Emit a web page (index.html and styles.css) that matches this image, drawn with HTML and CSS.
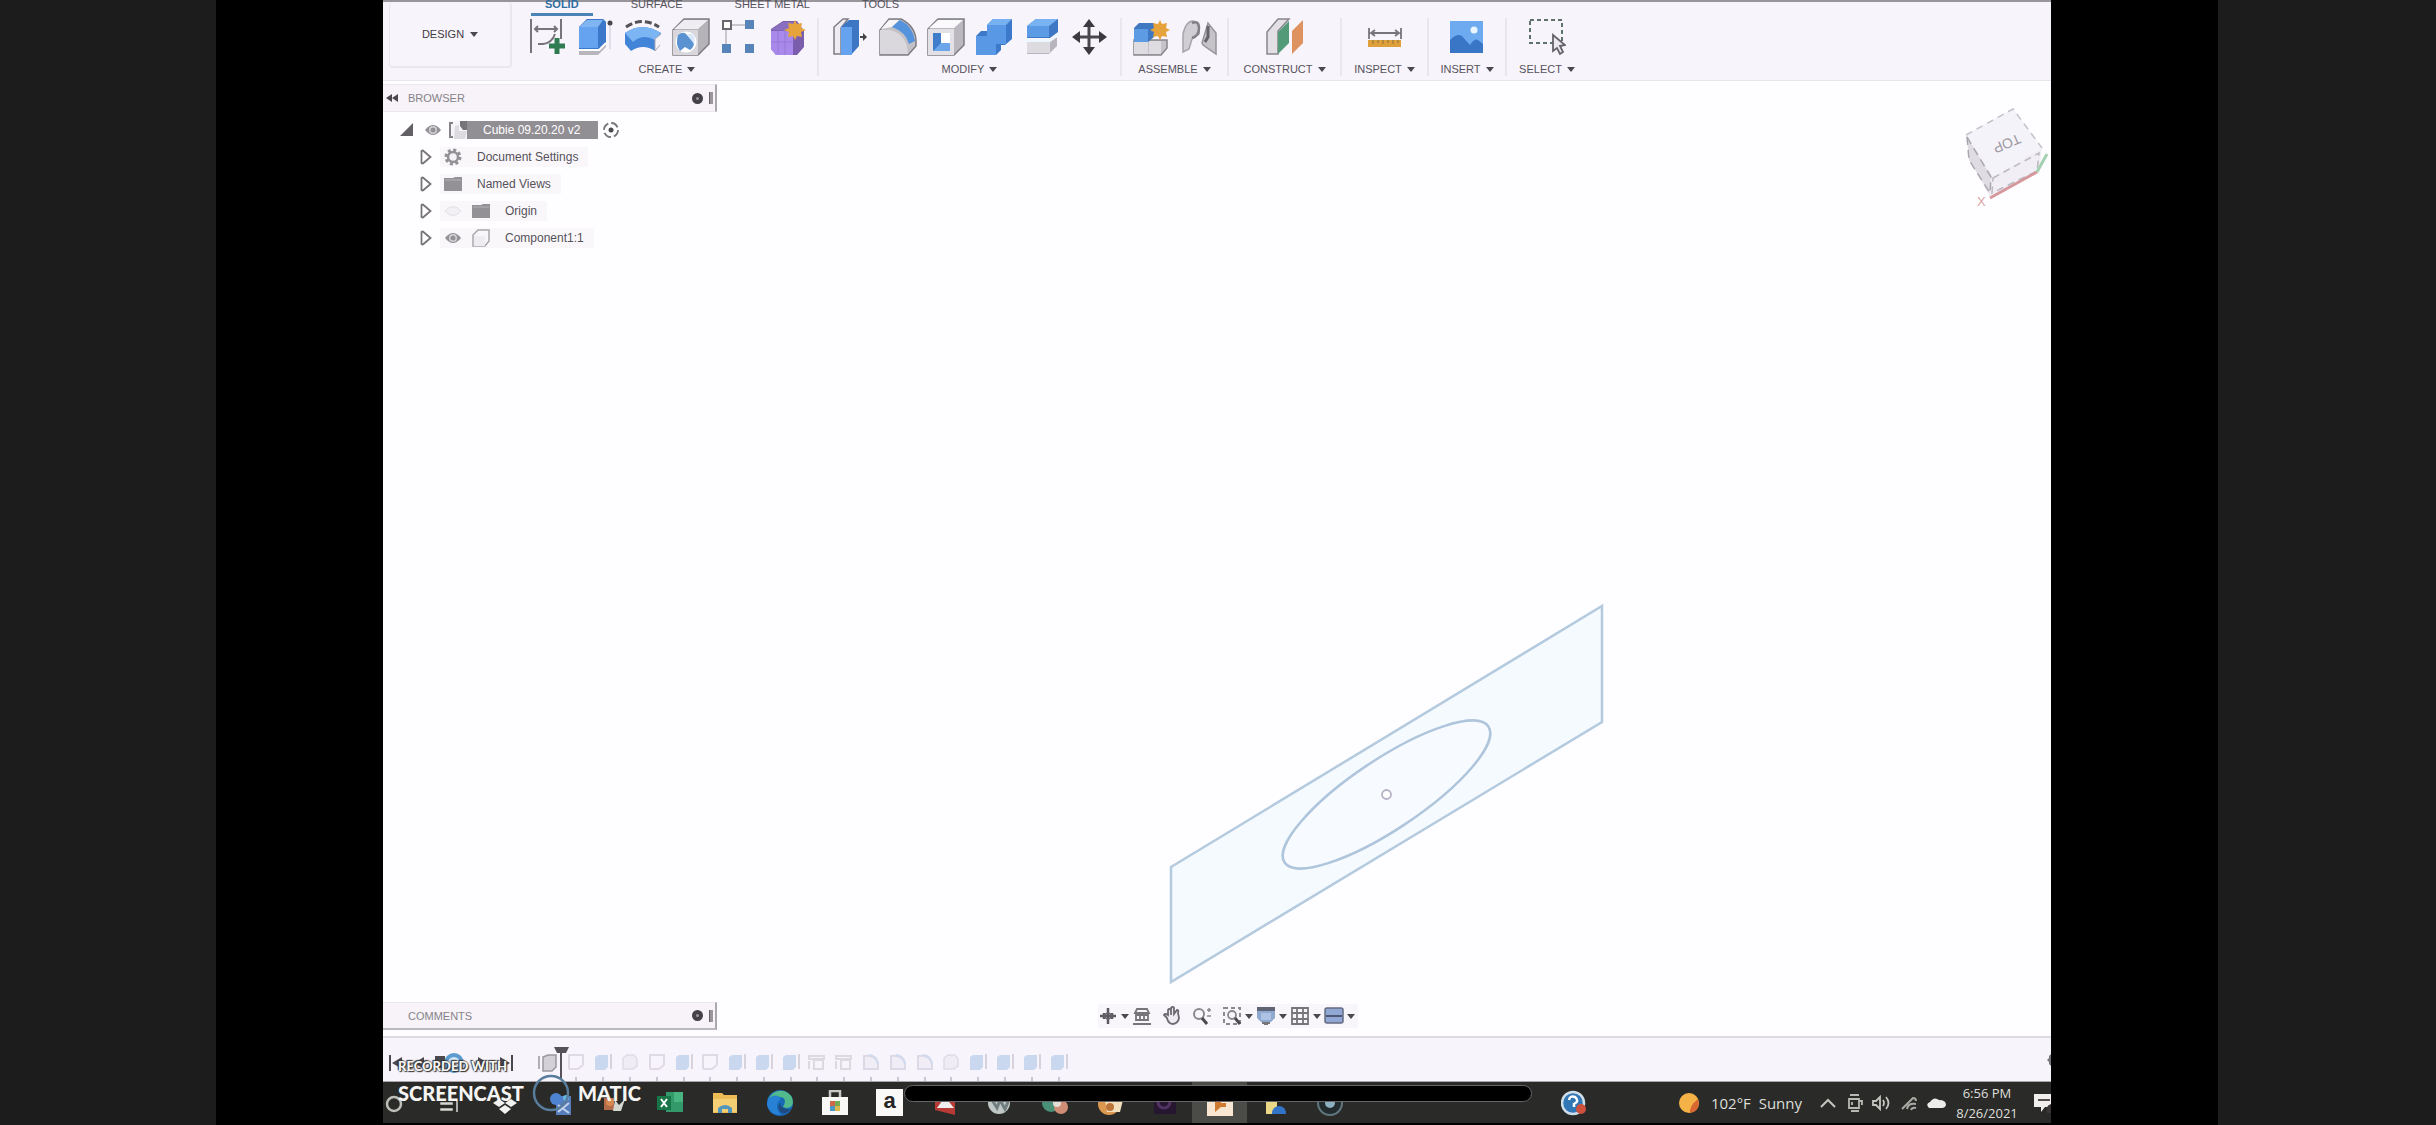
FILE: index.html
```html
<!DOCTYPE html>
<html lang="en">
<head>
<meta charset="utf-8">
<title>Design workspace</title>
<link rel="stylesheet" href="styles.css">
</head>
<body>
<svg class="defs" aria-hidden="true">
  <symbol id="eye" viewBox="0 0 18 18"><path d="M1 9q8-10 16 0q-8 10-16 0z" fill="currentColor"/><circle cx="9" cy="9" r="4" fill="#d6d2d8"/><circle cx="9" cy="9" r="2.500" fill="currentColor"/></symbol>
  <symbol id="eye-off" viewBox="0 0 18 18"><path d="M1 9q8-9 16 0q-8 9-16 0z" fill="#f3f0f5" stroke="#e4e0e6"/></symbol>
  <symbol id="folder" viewBox="0 0 18 18"><path d="M0 3h9l2-1h7v14H0z" fill="#939096"/><path d="M1 5h16" stroke="#b3b0b6"/></symbol>
  <symbol id="expand" viewBox="0 0 12 16"><path d="M1.500 2v12q1 1 2 0l7-6l-7-6q-1-1-2 0z" fill="#fff" stroke="#77747a" stroke-width="1.800"/></symbol>
  <symbol id="t-sketch" viewBox="0 0 20 20"><path d="M3 17V3h14v10M3 17h9l5-4" fill="none" stroke="#e0dae4" stroke-width="2"/></symbol>
  <symbol id="t-extrude" viewBox="0 0 20 20"><path d="M2 5l3-2h10v12l-3 3H2z" fill="#c9d8ee"/><path d="M18 2v15" stroke="#d6d3dc" stroke-width="2"/></symbol>
  <symbol id="t-body" viewBox="0 0 20 20"><path d="M3 6l4-3h7l3 4v7l-4 3H3z" fill="#f0ecf5" stroke="#e0dbe6" stroke-width="1.500"/></symbol>
  <symbol id="t-fillet" viewBox="0 0 20 20"><path d="M3 17V4q12-2 14 8v5z" fill="#f1edf7" stroke="#dcd8e6" stroke-width="2"/><path d="M8 3q8 1 9 9" stroke="#cfdaee" stroke-width="2" fill="none"/></symbol>
  <symbol id="t-hole" viewBox="0 0 20 20"><path d="M2 4h15v3H2zM7 8h9v9H7zM2 9v8" fill="none" stroke="#dcd9e0" stroke-width="2"/></symbol>
</svg>

<div class="stage">
<main class="app">
  <header class="toolbar">
    <button class="design">DESIGN <i class="caret"></i></button>
    <div class="ribbon">
      <nav class="tabs">
        <a class="tab tab-active" href="#solid">SOLID</a>
        <a class="tab" href="#surface">SURFACE</a>
        <a class="tab" href="#sheet">SHEET METAL</a>
        <a class="tab" href="#tools">TOOLS</a>
      </nav>
      <div class="groups">
        <section class="group group-create">
          <div class="icons">
            <button aria-label="Create sketch"><svg viewBox="0 0 38 38"><path d="M3 1v34M33 1v20M7 11h22M10 8l-3 3l3 3M26 8l3 3l-3 3M10 26h5q9-1 12-10" fill="none" stroke="#77747b" stroke-width="2"/><path d="M29 20v16M21 28h16" stroke="#2f7c52" stroke-width="5"/></svg></button>
            <button aria-label="Extrude"><svg viewBox="0 0 38 38"><path d="M3 31V9l8-8h16l3 3v25l-8 8H3z" fill="#b9b5bd"/><path d="M3 31V9l8-8h16l3 3v21l-6 6z" fill="#3c78c9"/><path d="M3 9h19v21H3z" fill="#65a2ef"/><path d="M3 9l8-7h16l-5 7z" fill="#7fb5f3"/><path d="M3 32h20l7-7" fill="none" stroke="#fff" stroke-width="2"/><path d="M34 7v24" stroke="#e2dde6" stroke-width="2"/><circle cx="34" cy="5" r="2.500" fill="#4a474d"/></svg></button>
            <button aria-label="Revolve"><svg viewBox="0 0 38 38"><path d="M2 9Q18-2 35 9" fill="none" stroke="#55525a" stroke-width="3" stroke-dasharray="7 3"/><path d="M1 15Q18 3 37 15L31 33Q19 25 7 33L1 26z" fill="#4285d8"/><path d="M1 15Q18 3 37 15L31 22Q19 15 9 24z" fill="#7bb5f4"/><path d="M37 16l-6 5v12l5-6" fill="#f7f4f9" stroke="#aaa6ae"/></svg></button>
            <button aria-label="Hole"><svg viewBox="0 0 38 38"><path d="M1 12L12 1h25v25L26 37H1z" fill="#b5b2b8" stroke="#7f7c84" stroke-width="1.500"/><path d="M1 12h25v25H1z" fill="#d9d6dc"/><path d="M2 11L12 2h24L26 11z" fill="#efedf1"/><circle cx="14" cy="24" r="10.500" fill="#fff"/><path d="M6 17q5-4 8-1l8 9q0 4-4 7l-5-3l-5 4q-5-7-2-16z" fill="#5b93d2"/><path d="M15 16l7 10q2-7-2-10" fill="#d8e7fa"/></svg></button>
            <button aria-label="Pattern"><svg viewBox="0 0 38 38"><path d="M8 7h22M6 11v17" stroke="#b9b6be" stroke-width="1.500"/><path d="M3 3h8v8H3z" fill="#fff" stroke="#6a676e" stroke-width="2"/><path d="M25 2h9v9h-9zM2 26h9v9H2zM25 26h9v9h-9z" fill="#5885b9"/></svg></button>
            <button aria-label="Create form"><svg viewBox="0 0 38 38"><path d="M3 11l12-8h14l7 10v16l-7 8H8l-5-6z" fill="#7a5dad"/><path d="M3 13h22v24H8l-5-6z" fill="#a98aec"/><path d="M3 12l12-8h10v9z" fill="#8a6fc0"/><path d="M10 13v23M17 12v25M3 24h23" stroke="#9578d4" stroke-width="1"/><path d="M27 2l2 4l5-1l-1 5l5 2l-5 2l1 5l-5-1l-2 4l-2-4l-5 1l1-5l-5-2l5-2l-1-5l5 1z" fill="#e6a33c"/></svg></button>
          </div>
          <button class="menu">CREATE <i class="caret"></i></button>
        </section>
        <section class="group group-modify">
          <div class="icons">
            <button aria-label="Press pull"><svg viewBox="0 0 38 38"><path d="M3 36V9l9-8h5l-7 9v26z" fill="#efedf1" stroke="#7f7c84" stroke-width="1.500"/><path d="M10 9l8-7h10v26l-8 9H10z" fill="#3d76c2"/><path d="M10 9h11v28H10z" fill="#65a2ef"/><path d="M29 19h5" stroke="#444" stroke-width="2"/><path d="M32 15l4 4l-4 4z" fill="#444"/></svg></button>
            <button aria-label="Fillet"><svg viewBox="0 0 38 38"><path d="M1 12L10 1h12q14 7 15 21v6l-8 9H1z" fill="#c3c0c6" stroke="#7f7c84" stroke-width="1.500"/><path d="M1 12h10q17 4 18 24H1z" fill="#dad7dd"/><path d="M2 11l8-9h10l-7 7z" fill="#f7f5f8"/><path d="M13 9l8-7q13 6 15 21l-6 3Q27 14 13 9z" fill="#5594dc"/></svg></button>
            <button aria-label="Shell"><svg viewBox="0 0 38 38"><path d="M1 11L11 1h26v26L27 37H1z" fill="#bbb8bf" stroke="#7f7c84" stroke-width="1.500"/><path d="M1 11h26v26H1z" fill="#e3e1e6"/><path d="M2 10l9-8h25l-9 8z" fill="#faf9fb"/><path d="M6 15h17v18H6z" fill="#fff"/><path d="M6 15h8v10h9v8H6z" fill="#6ca5ea"/><path d="M6 15h8v10l-8 8z" fill="#3f7dcb"/></svg></button>
            <button aria-label="Combine"><svg viewBox="0 0 38 38"><path d="M1 18l5-5h6V7l6-6h19v20l-7 6h-4v5l-5 5H1z" fill="#3d79cb"/><path d="M1 18h11V7h19v19H21v11H1z" fill="#5898e4"/><path d="M12 7l6-6h19l-6 6z" fill="#77b1f2"/></svg></button>
            <button aria-label="Split body"><svg viewBox="0 0 38 38"><path d="M4 24h23l7-7v11l-8 8H4z" fill="#b9b5be"/><path d="M4 24h23v11H4z" fill="#dddae0"/><path d="M2 21h26l8-7v4l-9 6H2z" fill="#eef6ff"/><path d="M4 8l9-7h22v13l-8 6H4z" fill="#3e78c4"/><path d="M4 8h22v11H4z" fill="#5b9ae4"/><path d="M4 8l9-7h22l-9 7z" fill="#79b3f2"/></svg></button>
            <button aria-label="Move"><svg viewBox="0 0 38 38"><path d="M18 7v24M7 19h23" stroke="#4a474d" stroke-width="3"/><path d="M18 1l6 8H12zM18 37l6-8H12zM1 19l8-6v12zM36 19l-8-6v12z" fill="#3c393f"/></svg></button>
          </div>
          <button class="menu">MODIFY <i class="caret"></i></button>
        </section>
        <section class="group group-assemble">
          <div class="icons">
            <button aria-label="New component"><svg viewBox="0 0 38 38"><path d="M2 22h33v8l-6 7H2z" fill="#c6c3ca" stroke="#88858c" stroke-width="1.500"/><path d="M2 23h14v13H2zM17 23h12v13H17z" fill="#dedbe1"/><path d="M2 10l5-5h15v14l-6 5H2z" fill="#3f78c0"/><path d="M2 11h14v13H2z" fill="#5e9be5"/><path d="M28 2l2 4l5-1l-1 5l4 2l-4 2l1 5l-5-1l-2 4l-2-4l-5 1l1-5l-4-2l4-2l-1-5l5 1z" fill="#e6a33c"/></svg></button>
            <button aria-label="Joint"><svg viewBox="0 0 38 38"><path d="M3 34V16Q6 3 13 3q7 1 6 13l-7 5l-3 10z" fill="#d0cdd3" stroke="#a7a4ab" stroke-width="1.500"/><path d="M12 5q7-3 7 5t-7 10" fill="none" stroke="#838087" stroke-width="2.500"/><path d="M22 25l6-20l8 10v21l-13-9z" fill="#c5c2c8" stroke="#96939a" stroke-width="1.500"/><path d="M28 8v11l-3 5" fill="none" stroke="#66636a" stroke-width="3"/></svg></button>
          </div>
          <button class="menu">ASSEMBLE <i class="caret"></i></button>
        </section>
        <section class="group group-construct">
          <div class="icons">
            <button aria-label="Offset plane"><svg viewBox="0 0 38 38"><path d="M1 36V14L12 1h11l-11 12v23z" fill="#e3e0e5" stroke="#88858c" stroke-width="1.500"/><path d="M12 14L23 3v22L12 36z" fill="#539a78"/><path d="M26 13L37 2v23L26 36z" fill="#dd925f"/></svg></button>
          </div>
          <button class="menu">CONSTRUCT <i class="caret"></i></button>
        </section>
        <section class="group group-inspect">
          <div class="icons">
            <button aria-label="Measure"><svg viewBox="0 0 38 38"><path d="M3 10v11M35 10v11M5 15h28M9 12l-4 3l4 3M29 12l4 3l-4 3" fill="none" stroke="#77747a" stroke-width="1.800"/><path d="M2 22h33v7H2z" fill="#dda03b"/><path d="M7 22v4M12 22v3M17 22v4M22 22v3M27 22v4M32 22v3" stroke="#a8803a" stroke-width="1.500"/></svg></button>
          </div>
          <button class="menu">INSPECT <i class="caret"></i></button>
        </section>
        <section class="group group-insert">
          <div class="icons">
            <button aria-label="Insert image"><svg viewBox="0 0 38 38"><path d="M2 3h33v32H2z" fill="#6eaaf0"/><path d="M2 22q7-7 12-4l8 9q5-7 8-5l5 4v9H2z" fill="#3a76c6"/><circle cx="26" cy="12" r="3.500" fill="#eaf5ff"/></svg></button>
          </div>
          <button class="menu">INSERT <i class="caret"></i></button>
        </section>
        <section class="group group-select">
          <div class="icons">
            <button aria-label="Select"><svg viewBox="0 0 38 38"><path d="M2 2h32v23H2z" fill="none" stroke="#5f7269" stroke-width="2" stroke-dasharray="4 3"/><path d="M25 17v16l4-3l3 6l3-2l-3-6l5-1z" fill="#eceaee" stroke="#66636a" stroke-width="1.800"/></svg></button>
          </div>
          <button class="menu">SELECT <i class="caret"></i></button>
        </section>
      </div>
    </div>
  </header>

  <section class="workspace">
    <svg class="model" viewBox="383 81 1668 955" aria-hidden="true">
      <path d="M1171 867L1602 606V722L1171 982z" fill="#f5faff" stroke="#b4cade" stroke-width="2.500"/>
      <ellipse cx="1386.500" cy="794.500" rx="122.500" ry="35" transform="rotate(-33.700 1386.500 794.500)" fill="#f7faff" stroke="#aec5dc" stroke-width="2.500"/>
      <circle cx="1386.500" cy="794.500" r="4.500" fill="#fff" stroke="#b5b2c5" stroke-width="1.800"/>
    </svg>

    <aside class="browser">
      <div class="panel-head">
        <svg class="rewind" viewBox="0 0 12 10"><path d="M6 1v8L0 5zM12 1v8L6 5z" fill="#4b484e"/></svg>
        <span class="panel-title">BROWSER</span>
        <button class="dot" aria-label="Panel options"></button>
        <i class="grip"></i>
      </div>
      <ul class="tree">
        <li class="row row-root">
          <svg class="s16" viewBox="0 0 16 16"><path d="M2 14h13V1z" fill="#625f65"/></svg>
          <svg class="s18 gray"><use href="#eye"/></svg>
          <span class="file"><svg class="s18" viewBox="0 0 18 18"><path d="M0 0h18v18H0z" fill="#f6f4f7"/><path d="M4 2H1v14h3" fill="none" stroke="#858288" stroke-width="2"/><path d="M6 5l4-1v6h8l-2 8H5z" fill="#dddae0"/><path d="M11 0h7v9h-4l-3-4z" fill="#77747a"/></svg><span>Cubie 09.20.20 v2</span></span>
          <svg class="s18" viewBox="0 0 18 18"><circle cx="9" cy="9" r="7" fill="#fff" stroke="#77747a" stroke-width="1.800" stroke-dasharray="8 3"/><circle cx="9" cy="9" r="2.500" fill="#4b484e"/></svg>
        </li>
        <li class="row"><svg class="exp"><use href="#expand"/></svg><span class="tag"><svg class="s18" viewBox="0 0 18 18"><circle cx="9" cy="9" r="7" fill="none" stroke="#939096" stroke-width="3" stroke-dasharray="3 2.500"/><circle cx="9" cy="9" r="5" fill="#f4f1f6" stroke="#939096" stroke-width="2.500"/></svg><span>Document Settings</span></span></li>
        <li class="row"><svg class="exp"><use href="#expand"/></svg><span class="tag"><svg class="s18"><use href="#folder"/></svg><span>Named Views</span></span></li>
        <li class="row"><svg class="exp"><use href="#expand"/></svg><span class="tag"><svg class="s18"><use href="#eye-off"/></svg><svg class="s18 second"><use href="#folder"/></svg><span>Origin</span></span></li>
        <li class="row"><svg class="exp"><use href="#expand"/></svg><span class="tag"><svg class="s18 gray"><use href="#eye"/></svg><svg class="s18 second" viewBox="0 0 18 18"><path d="M1 17V6l5-5h11v11l-4 5z" fill="#f8f6f9" stroke="#a9a6ad" stroke-width="1.500"/><path d="M2 7h11v10H2z" fill="#efecf1"/></svg><span>Component1:1</span></span></li>
      </ul>
    </aside>

    <svg class="viewcube" viewBox="0 0 90 110" aria-label="View cube">
      <path d="M5 29l4 26l20 36l49-25l3-24L52 3z" fill="#f0edf3"/>
      <path d="M5 29L52 3L81 42L32 71z" fill="#f5f3fa"/>
      <path d="M5 29L52 3L81 42" fill="none" stroke="#c4c1c8" stroke-width="1.500" stroke-dasharray="7 5"/>
      <path d="M6 31l24 40l-1 16L8 54z" fill="#dfdce3" stroke="#aaa7ae" stroke-width="1.500" stroke-dasharray="8 5"/>
      <path d="M32 72l46-25l-2 18l-45 22z" fill="#f1eef5" stroke="#bbb8bf" stroke-width="1.500" stroke-dasharray="7 5"/>
      <path d="M29 92L76 66" stroke="#d5999d" stroke-width="3"/><path d="M76 66l10-18" stroke="#a3d0b0" stroke-width="3"/>
      <text class="cube-top" text-anchor="middle" transform="translate(44 33) rotate(157)">TOP</text>
      <text class="cube-x" x="16" y="100">X</text>
    </svg>

    <div class="dock">
      <div class="panel-head comments"><span class="panel-title">COMMENTS</span><button class="dot" aria-label="Comment options"></button><i class="grip"></i></div>
      <div class="viewbar">
        <button class="vmenu" aria-label="Orbit"><svg viewBox="0 0 20 20"><path d="M10 2v16M2 10h16M6 7v6M14 7v6" stroke="#5b585e" stroke-width="2.500"/><path d="M6 10q4-6 8 0q-4 6-8 0z" fill="none" stroke="#66636a" stroke-width="1.500"/></svg><i class="caret"></i></button>
        <button aria-label="Look at"><svg viewBox="0 0 20 20"><path d="M1 18h18M3 7l2-4h10l2 4zM4 14V9h12v5zM8 10v4M12 10v4" fill="none" stroke="#77747a" stroke-width="1.800"/></svg></button>
        <button aria-label="Pan"><svg viewBox="0 0 20 20"><path d="M5 12L2 9q1-2 4 0V4q1-2 3 0v5V2q2-2 3 0v6l3-4q2 0 1 3l1 5q-1 6-7 6q-4-1-5-6z" fill="#f0edf2" stroke="#6d6a71" stroke-width="1.800"/></svg></button>
        <button aria-label="Zoom"><svg viewBox="0 0 20 20"><circle cx="7" cy="8" r="5" fill="none" stroke="#8b888e" stroke-width="2"/><path d="M10 12l5 6" stroke="#4b484e" stroke-width="3"/><path d="M15 4h4M17 2v4M15 10h4" stroke="#8b888e" stroke-width="1.500"/></svg></button>
        <button class="vmenu" aria-label="Fit"><svg viewBox="0 0 20 20"><path d="M2 2h16v16H2z" fill="none" stroke="#8b888e" stroke-width="2" stroke-dasharray="4 3"/><circle cx="10" cy="9" r="4" fill="none" stroke="#8b888e" stroke-width="1.800"/><path d="M13 12l5 6" stroke="#4b484e" stroke-width="3"/></svg><i class="caret"></i></button>
        <button class="vmenu" aria-label="Display settings"><svg viewBox="0 0 20 20"><path d="M1 1h18v11l-4 4H5l-4-4z" fill="#8fa8d0"/><path d="M1 1h18v4H1z" fill="#5e6676"/><path d="M5 7h10v7H5z" fill="#aec3e3"/><path d="M6 17h8M8 18h4" stroke="#77747a" stroke-width="2"/></svg><i class="caret"></i></button>
        <button class="vmenu" aria-label="Grid"><svg viewBox="0 0 20 20"><path d="M2 2h16v16H2zM7 2v16M13 2v16M2 7h16M2 13h16" fill="none" stroke="#77747a" stroke-width="1.800"/></svg><i class="caret"></i></button>
        <button class="vmenu" aria-label="Viewports"><svg viewBox="0 0 20 20"><rect x="1" y="2" width="18" height="15" rx="2" fill="#90a8d3" stroke="#646b82" stroke-width="1.500"/><path d="M2 10h16" stroke="#4e5874" stroke-width="2"/></svg><i class="caret"></i></button>
      </div>
    </div>
  </section>

  <section class="timeline">
    <div class="playback">
      <button aria-label="First"><svg viewBox="0 0 16 18"><path d="M2 1v16" stroke="#4b484e" stroke-width="2"/><path d="M14 3v12L4 9z" fill="#4b484e"/></svg></button>
      <button aria-label="Previous"><svg viewBox="0 0 16 18"><path d="M13 3v12L3 9z" fill="#4b484e"/></svg></button>
      <button aria-label="Play"><svg class="play" viewBox="0 0 34 20"><path d="M1 3h10v12H1z" fill="#4b484e"/><circle cx="20" cy="10" r="8" fill="#d5e8f7" stroke="#5b9bd0" stroke-width="4"/></svg></button>
      <button aria-label="Next"><svg viewBox="0 0 16 18"><path d="M3 3v12l10-6z" fill="#4b484e"/></svg></button>
      <button aria-label="Last"><svg viewBox="0 0 16 18"><path d="M14 1v16" stroke="#4b484e" stroke-width="2"/><path d="M2 3v12l10-6z" fill="#4b484e"/></svg></button>
    </div>
    <svg class="marker" viewBox="0 0 34 36" aria-label="Timeline marker"><path d="M2 10v13M6 11l5-2h8v12l-4 4H6z" fill="#d3d0d7" stroke="#9a979f" stroke-width="1.500"/><path d="M24 5v29" stroke="#55525a" stroke-width="2"/><path d="M17 1h15l-3 6h-9z" fill="#55525a"/></svg>
    <div class="features">
      <span><svg><use href="#t-sketch"/></svg></span><span><svg><use href="#t-extrude"/></svg></span><span><svg><use href="#t-body"/></svg></span><span><svg><use href="#t-sketch"/></svg></span><span><svg><use href="#t-extrude"/></svg></span><span><svg><use href="#t-sketch"/></svg></span><span><svg><use href="#t-extrude"/></svg></span><span><svg><use href="#t-extrude"/></svg></span><span><svg><use href="#t-extrude"/></svg></span><span><svg><use href="#t-hole"/></svg></span><span><svg><use href="#t-hole"/></svg></span><span><svg><use href="#t-fillet"/></svg></span><span><svg><use href="#t-fillet"/></svg></span><span><svg><use href="#t-fillet"/></svg></span><span><svg><use href="#t-body"/></svg></span><span><svg><use href="#t-extrude"/></svg></span><span><svg><use href="#t-extrude"/></svg></span><span><svg><use href="#t-extrude"/></svg></span><span><svg><use href="#t-extrude"/></svg></span>
    </div>
    <button class="settings" aria-label="Timeline settings"><svg viewBox="0 0 4 14"><path d="M4 1L2 3v2L0 7l2 2v2l2 2z" fill="#77747a"/></svg></button>
  </section>

  <footer class="taskbar">
    <button class="start" aria-label="Search"><svg viewBox="0 0 26 26"><circle cx="11" cy="14" r="7" fill="none" stroke="#bdbdb9" stroke-width="2.500"/></svg></button>
    <button class="task" aria-label="Task view"><svg viewBox="0 0 26 26"><path d="M4 13h11v1H4zM4 19h11v1H4zM20 11v11" fill="#d8d8d4" stroke="#d8d8d4" stroke-width="1.500"/></svg></button>
    <button class="task" aria-label="Dropbox"><svg viewBox="0 0 26 26"><path d="M7 9l6 4l6-4l6 4l-6 4l-6-4l-6 4l-6-4zM7 19l6-4l6 4l-6 5z" fill="#f1f1ef"/></svg></button>
    <button class="task" aria-label="Capture"><svg viewBox="0 0 26 26"><path d="M9 6h15v19H9z" fill="#587dbd"/><circle cx="9" cy="9" r="6" fill="#4e83d2"/><circle cx="19" cy="8" r="3" fill="#67bce5"/><path d="M11 22l11-9M11 15l11 8" stroke="#c1d2ed" stroke-width="2"/></svg></button>
    <button class="task" aria-label="Paint"><svg viewBox="0 0 26 26"><path d="M2 8h10v12H2z" fill="#b46b48"/><circle cx="8" cy="12" r="4" fill="#d8894f"/><path d="M13 10l4 5l6-6l-4 12h-8z" fill="#d5d8d1"/></svg></button>
    <button class="task" aria-label="Excel"><svg viewBox="0 0 26 26"><path d="M9 2h17v20H9z" fill="#33996a"/><path d="M17 2h9v10h-9z" fill="#48b47f"/><path d="M0 6h14v14H0z" fill="#177547"/><path d="M4 9l6 8M10 9l-6 8" stroke="#fff" stroke-width="2"/></svg></button>
    <button class="task" aria-label="Files"><svg viewBox="0 0 26 26"><path d="M1 3h9l2 2h13v18H1z" fill="#edbd55"/><path d="M1 9h24v13H1z" fill="#f4cf73"/><path d="M6 23v-5q7-6 14 0v5h-4v-4h-6v4z" fill="#5095bc"/></svg></button>
    <button class="task" aria-label="Edge"><svg viewBox="0 0 26 26"><circle cx="13" cy="13" r="13" fill="#1768b6"/><path d="M1 9Q7-1 17 1q9 3 9 12q-2 7-10 4q5-9-3-10Q5 5 1 9z" fill="#52b98d"/><path d="M1 9q8-7 13 0q-8 6 0 16Q2 25 0 14z" fill="#2781d5"/><path d="M13 13q1 7 11 6q-4 5-9 4q-6-4-2-10z" fill="#204b80"/></svg></button>
    <button class="task" aria-label="Store"><svg viewBox="0 0 26 26"><path d="M8 7V1h10v6" fill="none" stroke="#c9c9c6" stroke-width="2.500"/><path d="M0 7h26v18H0z" fill="#f8f8f7"/><path d="M8 11h5v5H8z" fill="#cf6848"/><path d="M13 11h5v5h-5z" fill="#75aa57"/><path d="M8 16h5v5H8z" fill="#4c97c3"/><path d="M13 16h5v5h-5z" fill="#d9b74c"/></svg></button>
    <button class="task"><span class="amazon">a</span></button>
    <button class="task" aria-label="Document viewer"><svg viewBox="0 0 26 26"><path d="M3 6h20v19L3 20z" fill="#b73b34"/><path d="M5 18l8-11l9 11z" fill="#eee"/></svg></button>
    <button class="task" aria-label="Media tool"><svg viewBox="0 0 26 26"><circle cx="12" cy="13" r="11" fill="#bfc8c6"/><path d="M5 10l5 8l3-8l5 9l3-7" fill="none" stroke="#717e80" stroke-width="3"/></svg></button>
    <button class="task" aria-label="Contacts"><svg viewBox="0 0 26 26"><circle cx="9" cy="13" r="9" fill="#489077"/><circle cx="19" cy="17" r="7" fill="#cf8c76"/><circle cx="15" cy="13" r="4" fill="#e4ded5"/></svg></button>
    <button class="task" aria-label="Artwork"><svg viewBox="0 0 26 26"><circle cx="12" cy="14" r="11" fill="#dd9850"/><path d="M8 10h18l-3 12H10z" fill="#f1dfbe"/><circle cx="13" cy="17" r="4" fill="#bc7439"/></svg></button>
    <button class="task" aria-label="Editor"><svg viewBox="0 0 26 26"><path d="M2 2h22v22H2z" fill="#26162f"/><circle cx="12" cy="12" r="6" fill="none" stroke="#513363" stroke-width="3"/></svg></button>
    <button class="task task-active" aria-label="Design"><svg viewBox="0 0 26 26"><path d="M0 0h26v26H0z" fill="#f7e6d2"/><path d="M8 22V5h12v5h-6v3h5v4h-5z" fill="#d07a30"/></svg></button>
    <button class="task" aria-label="Notes"><svg viewBox="0 0 26 26"><path d="M4 2h11v22H4z" fill="#ead887"/><path d="M10 24q0-8 8-8q6 1 6 8z" fill="#3275c7"/></svg></button>
    <button class="task" aria-label="Recorder"><svg viewBox="0 0 26 26"><circle cx="13" cy="13" r="12" fill="#222c2e" stroke="#60777f" stroke-width="2"/><circle cx="13" cy="13" r="5" fill="#8db1c1"/></svg></button>
    <button class="help" aria-label="Help"><svg viewBox="0 0 26 26"><circle cx="12" cy="13" r="11" fill="#3277b5" stroke="#cfdee9" stroke-width="2.500"/><path d="M8 10q1-5 6-3q5 4-1 7v3" fill="none" stroke="#fff" stroke-width="2.500"/><circle cx="20" cy="19" r="5" fill="#cf503d"/></svg></button>
    <div class="tray">
      <button class="weather"><svg viewBox="0 0 24 24"><circle cx="12" cy="12" r="10" fill="#f5b347"/><path d="M21 8q3 12-8 14q-1-7 8-14z" fill="#d86731"/></svg><span>102°F&nbsp; Sunny</span></button>
      <button aria-label="Hidden icons"><svg viewBox="0 0 20 20"><path d="M3 14l7-7l7 7" fill="none" stroke="#c4c4c0" stroke-width="2"/></svg></button>
      <button aria-label="Device"><svg viewBox="0 0 20 20"><path d="M5 2h9M4 6h10v9H4zM14 8h3v4M6 18h8M7 9v3" fill="none" stroke="#b7b7b3" stroke-width="1.800"/></svg></button>
      <button aria-label="Volume"><svg viewBox="0 0 20 20"><path d="M1 8h3l4-4v12l-4-4H1zM11 7q2 3 0 6M14 4q5 6 0 12" fill="none" stroke="#c4c4c0" stroke-width="1.800"/></svg></button>
      <button aria-label="Network"><svg viewBox="0 0 20 20"><path d="M3 16L14 5q3 0 3 3M8 16q1-6 9-5M12 17q1-3 5-2" fill="none" stroke="#a9a9a5" stroke-width="2"/></svg></button>
      <button aria-label="Cloud"><svg viewBox="0 0 20 20"><path d="M3 15q-4-4 1-6q4-6 9-2q7 0 7 5q-1 3-4 3z" fill="#ececea"/></svg></button>
      <time class="clock"><span>6:56 PM</span><span>8/26/2021</span></time>
      <button class="notice" aria-label="Notifications"><svg viewBox="0 0 18 22"><path d="M1 2h17v13h-6l-4 5v-5H1z" fill="#f1efee"/><path d="M5 8h12" stroke="#55504f" stroke-width="2"/><path d="M18 12q-6 2-4 9h4z" fill="#3a3635"/></svg></button>
    </div>
  </footer>

  <div class="watermark">
    <span class="wm-small">RECORDED WITH</span>
    <div class="wm-line"><span>SCREENCAST</span><svg viewBox="0 0 38 38"><circle cx="19" cy="19" r="17" fill="none" stroke="#587c9c" stroke-width="2.500"/></svg><span>MATIC</span></div>
  </div>
</main>
</div>
<div class="home-bar"></div>
</body>
</html>
```

FILE: styles.css
```css
* { box-sizing: border-box; }
body { margin: 0; background: #1c1c1c; font-family: "Liberation Sans", Arial, sans-serif; font-size: 12px; color: #55525a; }
button { border: 0; padding: 0; background: none; font: inherit; color: inherit; }
a { color: inherit; text-decoration: none; }
svg { display: block; flex: none; }
.defs { position: absolute; width: 0; height: 0; }

.stage { display: grid; grid-template-columns: 167fr 1668fr 167fr; margin: 0 8.949vw 0 8.867vw; background: #000; min-height: 100vh; }
.app { grid-column: 2; position: relative; display: flex; flex-direction: column; min-width: 0; margin-bottom: 2px; overflow: hidden; background: #fefdff; }

.caret { display: inline-block; flex: none; border: 4px solid transparent; border-top: 5px solid #4b484e; border-bottom: 0; }

.toolbar { display: flex; height: 81px; background: #f8f4fb; border-top: 2px solid #98959b; border-bottom: 1px solid #eae5ed; font-size: 11px; }
.design { display: flex; align-items: center; justify-content: center; gap: 6px; width: 123px; height: 66px; margin: 0 5px 0 6px; border: 1px solid #ece7ef; border-width: 0 2px 2px 1px; border-radius: 4px; color: #3f3c42; }
.ribbon { flex: 1; min-width: 0; }
.tabs { display: flex; gap: 24px; height: 14px; margin-left: 14px; align-items: flex-end; }
.tab { padding: 0 14px 3px; border-bottom: 3px solid transparent; line-height: 12px; white-space: nowrap; }
.tab-active { border-color: #4a85b5; color: #2f6f9f; font-weight: bold; }
.groups { display: flex; padding-top: 2px; }
.group { display: flex; flex-direction: column; align-items: center; gap: 5px; border-right: 2px solid #ebe6ee; height: 58px; }
.group:last-child { border-right: 0; }
.group-create { width: 302px; }
.group-modify { width: 303px; }
.group-assemble { width: 107px; }
.group-construct { width: 113px; }
.group-inspect { width: 87px; }
.group-insert { width: 78px; }
.group-select { width: 80px; }
.icons { display: flex; gap: 10px; }
.icons svg { width: 38px; height: 38px; }
.menu { display: flex; align-items: center; gap: 5px; line-height: 16px; white-space: nowrap; }

.workspace { position: relative; flex: 1; min-height: 480px; display: flex; flex-direction: column; justify-content: space-between; }
.model { position: absolute; inset: 0; width: 100%; height: 100%; }
.browser { position: relative; width: 334px; padding-top: 3px; }
.panel-head { display: flex; align-items: center; height: 28px; padding: 0 2px 0 3px; background: #f7f3f9; border: 1px solid #ebe7ed; border-width: 1px 2px 1px 0; border-right-color: #aaa7ad; font-size: 11px; color: #858288; }
.rewind { width: 12px; height: 10px; }
.panel-title { flex: 1; margin-left: 10px; }
.dot { width: 11px; height: 11px; border: 4px solid #444148; border-radius: 50%; background: #99969c; }
.grip { width: 4px; height: 12px; margin-left: 6px; background: #99969c; border-left: 1px solid #66636a; }
.tree { margin: 4px 0 0; padding: 0; list-style: none; }
.row { display: flex; align-items: center; gap: 8px; height: 27px; padding-left: 37px; }
.row-root { padding-left: 15px; gap: 10px; }
.row-root .file { display: flex; align-items: center; gap: 16px; height: 18px; width: 149px; margin: 0 -6px 0 -3px; background: #918e94; color: #fff; }
.tag { display: flex; align-items: center; gap: 15px; height: 20px; padding: 0 10px 0 4px; background: #faf7fb; }
.second { margin-left: -5px; }
.s18 { width: 18px; height: 18px; }
.s16 { width: 16px; height: 16px; }
.exp { width: 12px; height: 16px; }
.gray { color: #939096; }
.viewcube { position: absolute; top: 25px; right: 0; width: 90px; height: 110px; overflow: hidden; }
.cube-top { font-size: 14px; fill: #9b98a1; }
.cube-x { font-size: 13px; fill: #dba5a8; }

.dock { position: relative; display: grid; grid-template-columns: 334px 1fr 312px; align-items: center; padding-bottom: 6px; }
.comments { border-bottom: 2px solid #bbb8be; }
.comments .panel-title { margin-left: 22px; }
.viewbar { justify-self: center; display: flex; height: 24px; background: #f9f6fb; }
.viewbar button { display: flex; align-items: center; gap: 3px; width: 30px; }
.viewbar .vmenu { width: 34px; }
.viewbar svg { width: 20px; height: 20px; }

.timeline { display: flex; height: 46px; background: #f8f4fb; border-top: 2px solid #dedae2; border-bottom: 1px solid #aaa7ad; }
.playback { display: flex; align-items: center; justify-content: space-between; width: 126px; height: 18px; margin: 16px 0 0 5px; }
.playback svg { width: 16px; height: 18px; }
.playback .play { width: 34px; height: 20px; }
.marker { width: 34px; height: 36px; margin: 8px 0 0 23px; }
.features { display: grid; grid-template-columns: repeat(19, 1fr); width: 509px; margin-left: -8px; }
.features span { display: flex; flex-direction: column; align-items: center; justify-content: space-between; padding-top: 14px; }
.features span::after { content: ""; width: 2px; height: 4px; background: #cbc7d0; }
.features svg { width: 20px; height: 20px; }
.settings { margin-left: auto; }
.settings svg { width: 4px; height: 14px; }

.taskbar { display: flex; align-items: stretch; height: 41px; background: #2a2b28; color: #dededb; }
.taskbar button { display: flex; align-items: center; justify-content: center; }
.taskbar svg { width: 26px; height: 26px; }
.taskbar .start { width: 39px; justify-content: flex-start; }
.task { flex: 0 1 55px; }
.task-active { background: #4b4b48; }
.amazon { width: 27px; height: 27px; background: #faf9f8; color: #252525; font-size: 22px; line-height: 24px; font-weight: bold; }
.help { width: 26px; margin-left: 204px; }
.tray { display: flex; align-items: center; margin-left: auto; }
.tray button { width: 27px; height: 100%; }
.tray svg { width: 20px; height: 20px; }
.tray .weather { width: auto; gap: 10px; margin-right: 12px; font-family: "Open Sans", sans-serif; font-size: 15px; white-space: nowrap; }
.tray .weather svg { width: 24px; height: 24px; }
.clock { display: flex; flex-direction: column; align-items: center; width: 76px; margin-right: 8px; font-family: "Open Sans", sans-serif; font-size: 13px; line-height: 20px; }
.tray .notice { width: 18px; }
.tray .notice svg { width: 18px; height: 22px; }

.watermark { position: absolute; left: 15px; bottom: 11px; font-family: Lato, sans-serif; font-weight: 900; color: #f6f5f4; }
.wm-small { display: block; font-size: 13px; line-height: 16px; text-shadow: 0 0 2px #333, 1px 1px 1px #333, -1px -1px 1px #333; }
.wm-line { display: flex; align-items: center; gap: 8px; height: 38px; font-size: 20px; line-height: 38px; }
.wm-line svg { width: 38px; height: 38px; }

.home-bar { position: fixed; left: 50%; bottom: 23px; width: 628px; height: 17px; transform: translateX(-50%); background: #000; border: 1px solid #66666a; border-radius: 9px; }
```
